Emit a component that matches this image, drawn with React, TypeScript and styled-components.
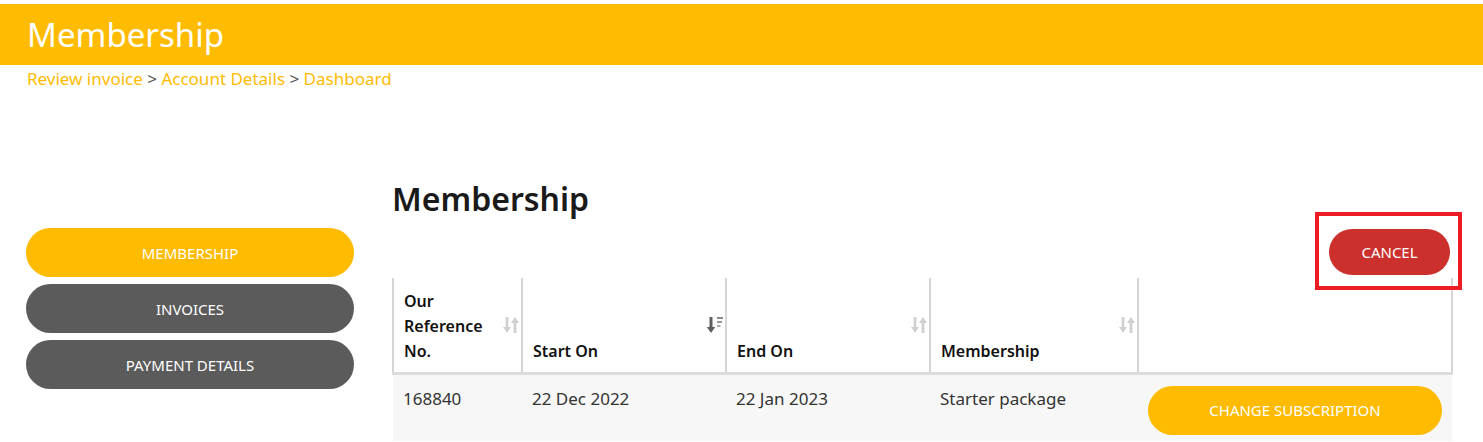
import React from 'react';
import styled, { createGlobalStyle } from 'styled-components';

const GlobalStyle = createGlobalStyle`
  html, body {
    margin: 0;
    padding: 0;
    background: #fff;
    font-family: 'Noto Sans', 'Lato', sans-serif;
    color: #222;
  }
`;

const yellow = '#ffbb00';

const Page = styled.div`
  padding-top: 4px;
`;

const TopBar = styled.header`
  background: ${yellow};
  height: 61px;
  display: flex;
  align-items: center;
  padding: 0 27px;

  h1 {
    margin: 0;
    font-size: 33px;
    font-weight: 400;
    color: #fff;
  }
`;

const Crumbs = styled.nav`
  padding: 2px 27px 0;
  font-size: 17px;
  line-height: 24px;
  color: #555;

  a {
    color: ${yellow};
    text-decoration: none;
  }
`;

const Layout = styled.div`
  display: grid;
  grid-template-columns: 328px 1059px;
  column-gap: 38px;
  padding: 0 32px 0 26px;
  margin-top: 88px;
`;

const Side = styled.aside`
  display: flex;
  flex-direction: column;
  gap: 7px;
  padding-top: 49px;
`;

const PillButton = styled.button<{ $tone: 'yellow' | 'gray' | 'red' }>`
  border: none;
  border-radius: 999px;
  height: 49px;
  font-family: inherit;
  font-size: 15px;
  text-transform: uppercase;
  color: #fff;
  cursor: pointer;
  background: ${(p) => (p.$tone === 'yellow' ? yellow : p.$tone === 'red' ? '#cb302d' : '#5b5b5b')};
`;

const Main = styled.main`
  display: flex;
  flex-direction: column;

  h2 {
    margin: 0;
    font-size: 32px;
    font-weight: 600;
    line-height: 40px;
    color: #1a1a1a;
  }
`;

const Actions = styled.div`
  display: flex;
  justify-content: flex-end;
  margin-top: 10px;
  padding-right: 1px;
`;

const Marked = styled.div`
  position: relative;

  &::after {
    content: '';
    position: absolute;
    top: -17px;
    bottom: -15px;
    left: -14px;
    right: -12px;
    border: 4px solid #ed1c24;
    pointer-events: none;
  }
`;

const CancelButton = styled(PillButton)`
  width: 121px;
  height: 46px;
`;

const Table = styled.table`
  margin-top: 3px;
  width: 1059px;
  border-collapse: collapse;
  table-layout: fixed;
`;

const Th = styled.th<{ $w: number }>`
  width: ${(p) => p.$w}px;
  height: 95px;
  box-sizing: border-box;
  padding: 8px 30px 8px 10px;
  border-left: 2px solid #d6d6d6;
  border-right: 2px solid #d6d6d6;
  border-bottom: 3px solid #dcdcdc;
  text-align: left;
  vertical-align: bottom;
  font-size: 16px;
  font-weight: 600;
  line-height: 25px;
  color: #111;
  position: relative;
`;

const SortMark = styled.span`
  position: absolute;
  right: 1px;
  top: 50%;
  transform: translateY(-50%);
  display: flex;
`;

const Td = styled.td`
  background: #f7f7f7;
  padding: 11px 10px 6px;
  vertical-align: top;
  font-size: 17px;
  line-height: 26px;
  color: #333;
`;

const ChangeButton = styled(PillButton)`
  width: 294px;
  height: 49px;
`;

const Arrows: React.FC<{ active?: boolean }> = ({ active }) =>
  active ? (
    <svg width="18" height="20" viewBox="0 0 18 20">
      <path d="M5 2v11" stroke="#5e5e5e" strokeWidth="3" />
      <path d="M0.8 12h8.4l-4.2 6z" fill="#5e5e5e" />
      <rect x="11" y="2" width="6" height="2" fill="#8a8a8a" />
      <rect x="11" y="6" width="5" height="2" fill="#9a9a9a" />
      <rect x="11" y="10" width="3.5" height="2" fill="#aaa" />
    </svg>
  ) : (
    <svg width="18" height="20" viewBox="0 0 18 20">
      <path d="M5 2v11" stroke="#d0d0d0" strokeWidth="2.8" />
      <path d="M1 12h8l-4 6z" fill="#d0d0d0" />
      <path d="M13 7v11" stroke="#d0d0d0" strokeWidth="2.8" />
      <path d="M9 8h8l-4-6z" fill="#d0d0d0" />
    </svg>
  );

const columns = [
  { label: 'Our Reference No.', w: 129, sort: true },
  { label: 'Start On', w: 204, sort: true, active: true },
  { label: 'End On', w: 204, sort: true },
  { label: 'Membership', w: 208, sort: true },
  { label: '', w: 314, sort: false },
];

const App: React.FC = () => {
  return (
    <Page>
      <GlobalStyle />
      <TopBar>
        <h1>Membership</h1>
      </TopBar>
      <Crumbs>
        <a href="#">Review invoice</a> &gt; <a href="#">Account Details</a> &gt;{' '}
        <a href="#">Dashboard</a>
      </Crumbs>

      <Layout>
        <Side>
          <PillButton $tone="yellow">Membership</PillButton>
          <PillButton $tone="gray">Invoices</PillButton>
          <PillButton $tone="gray">Payment Details</PillButton>
        </Side>

        <Main>
          <h2>Membership</h2>
          <Actions>
            <Marked>
              <CancelButton $tone="red">Cancel</CancelButton>
            </Marked>
          </Actions>
          <Table>
            <thead>
              <tr>
                {columns.map((c, i) => (
                  <Th key={i} $w={c.w}>
                    {c.label}
                    {c.sort && (
                      <SortMark>
                        <Arrows active={c.active} />
                      </SortMark>
                    )}
                  </Th>
                ))}
              </tr>
            </thead>
            <tbody>
              <tr>
                <Td>168840</Td>
                <Td>22 Dec 2022</Td>
                <Td>22 Jan 2023</Td>
                <Td>Starter package</Td>
                <Td>
                  <ChangeButton $tone="yellow">Change Subscription</ChangeButton>
                </Td>
              </tr>
            </tbody>
          </Table>
        </Main>
      </Layout>
    </Page>
  );
};

export default App;
